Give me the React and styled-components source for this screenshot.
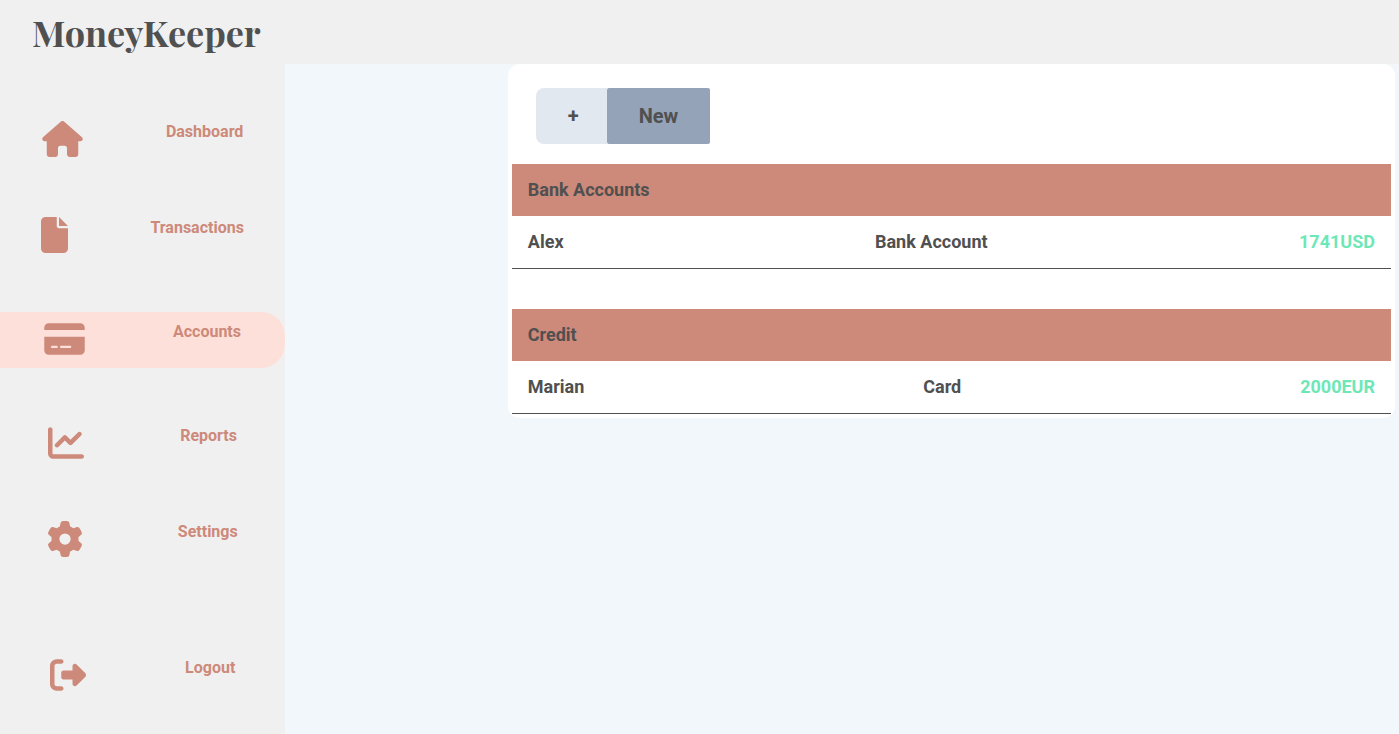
import React from "react";
import styled, { createGlobalStyle } from "styled-components";
import {
  FaHouse,
  FaFile,
  FaCreditCard,
  FaChartLine,
  FaGear,
  FaRightFromBracket,
} from "react-icons/fa6";

const GlobalStyle = createGlobalStyle`
  *, *::before, *::after { box-sizing: border-box; }
  body {
    margin: 0;
    background: #f1f7fa;
    color: #505050;
    font-family: Roboto, "Liberation Sans", sans-serif;
    font-size: 16px;
    line-height: 24px;
  }
`;

const Page = styled.div`
  display: flex;
  flex-direction: column;
  min-height: 100vh;
`;

const Header = styled.header`
  display: flex;
  align-items: center;
  height: 64px;
  padding: 0 32px;
  background: #f0f0f0;
`;

const Brand = styled.h1`
  margin: 0;
  font-family: "Playfair Display", "Liberation Serif", serif;
  font-size: 36px;
  font-weight: 700;
  line-height: 40px;
`;

const Body = styled.div`
  display: flex;
  flex: 1;
`;

const Sidebar = styled.nav`
  display: flex;
  flex: 0 0 285px;
  flex-direction: column;
  gap: 40px;
  padding: 48px 0 24px;
  background: #f0f0f0;
`;

const NavItem = styled.a`
  display: flex;
  align-items: flex-start;
  justify-content: space-around;
  margin: ${({ $active, $last }) => ($active ? "8px 0" : $last ? "40px 0 0" : "0")};
  padding: 8px 0;
  border-radius: 0 24px 24px 0;
  background: ${({ $active }) => ($active ? "#fee0da" : "transparent")};
  color: #cd8979;
  font-weight: 700;
  text-decoration: none;
`;

const NavIcon = styled.span`
  display: flex;
  align-items: center;
  height: 40px;
  padding-bottom: 2px;

  svg {
    width: ${({ $width }) => $width}px;
    height: 36px;
  }
`;

const Main = styled.main`
  flex: 1;
`;

const Card = styled.div`
  display: flex;
  flex-direction: column;
  margin: 0 4px 0 20%;
  padding: 24px 4px 4px;
  border-radius: 12px;
  background: #ffffff;
`;

const Actions = styled.div`
  display: flex;
  margin: 0 24px 20px;
`;

const ActionButton = styled.button`
  padding: ${({ $primary }) => ($primary ? "14px 32px" : "14px 28px 14px 32px")};
  border: 0;
  border-radius: ${({ $primary }) => ($primary ? "2px" : "8px 0 0 8px")};
  background: ${({ $primary }) => ($primary ? "#94a3b8" : "#e2e8f0")};
  color: inherit;
  font-family: inherit;
  font-size: 20px;
  font-weight: 700;
  line-height: 28px;
  cursor: pointer;
`;

const Groups = styled.div`
  display: flex;
  flex-direction: column;
  gap: 40px;
`;

const GroupTitle = styled.h2`
  margin: 0;
  padding: 12px 16px;
  background: #cd8979;
  font-size: 18px;
  font-weight: 700;
  line-height: 28px;
`;

const AccountList = styled.ul`
  margin: 0;
  padding: 0;
  list-style: none;
`;

const AccountRow = styled.li`
  display: flex;
  justify-content: space-between;
  padding: 12px 16px;
  border-bottom: 1px solid #505050;
  font-size: 18px;
  font-weight: 700;
  line-height: 28px;
`;

const Amount = styled.span`
  color: #6ee7b7;
`;

const navItems = [
  { label: "Dashboard", Icon: FaHouse, width: 41 },
  { label: "Transactions", Icon: FaFile, width: 27 },
  { label: "Accounts", Icon: FaCreditCard, width: 41, active: true },
  { label: "Reports", Icon: FaChartLine, width: 36 },
  { label: "Settings", Icon: FaGear, width: 36 },
  { label: "Logout", Icon: FaRightFromBracket, width: 36, last: true },
];

const groups = [
  {
    title: "Bank Accounts",
    accounts: [{ name: "Alex", type: "Bank Account", amount: "1741USD" }],
  },
  {
    title: "Credit",
    accounts: [{ name: "Marian", type: "Card", amount: "2000EUR" }],
  },
];

export default function App() {
  return (
    <Page>
      <GlobalStyle />
      <Header>
        <Brand>MoneyKeeper</Brand>
      </Header>
      <Body>
        <Sidebar aria-label="Main">
          {navItems.map(({ label, Icon, width, active, last }) => (
            <NavItem
              key={label}
              href={`#${label.toLowerCase()}`}
              $active={active}
              $last={last}
              aria-current={active ? "page" : undefined}
            >
              <NavIcon $width={width}>
                <Icon aria-hidden="true" />
              </NavIcon>
              <span>{label}</span>
            </NavItem>
          ))}
        </Sidebar>
        <Main>
          <Card>
            <Actions>
              <ActionButton type="button" aria-label="Add account">
                +
              </ActionButton>
              <ActionButton type="button" $primary>
                New
              </ActionButton>
            </Actions>
            <Groups>
              {groups.map(({ title, accounts }) => (
                <section key={title}>
                  <GroupTitle>{title}</GroupTitle>
                  <AccountList>
                    {accounts.map(({ name, type, amount }) => (
                      <AccountRow key={name}>
                        <span>{name}</span>
                        <span>{type}</span>
                        <Amount>{amount}</Amount>
                      </AccountRow>
                    ))}
                  </AccountList>
                </section>
              ))}
            </Groups>
          </Card>
        </Main>
      </Body>
    </Page>
  );
}
